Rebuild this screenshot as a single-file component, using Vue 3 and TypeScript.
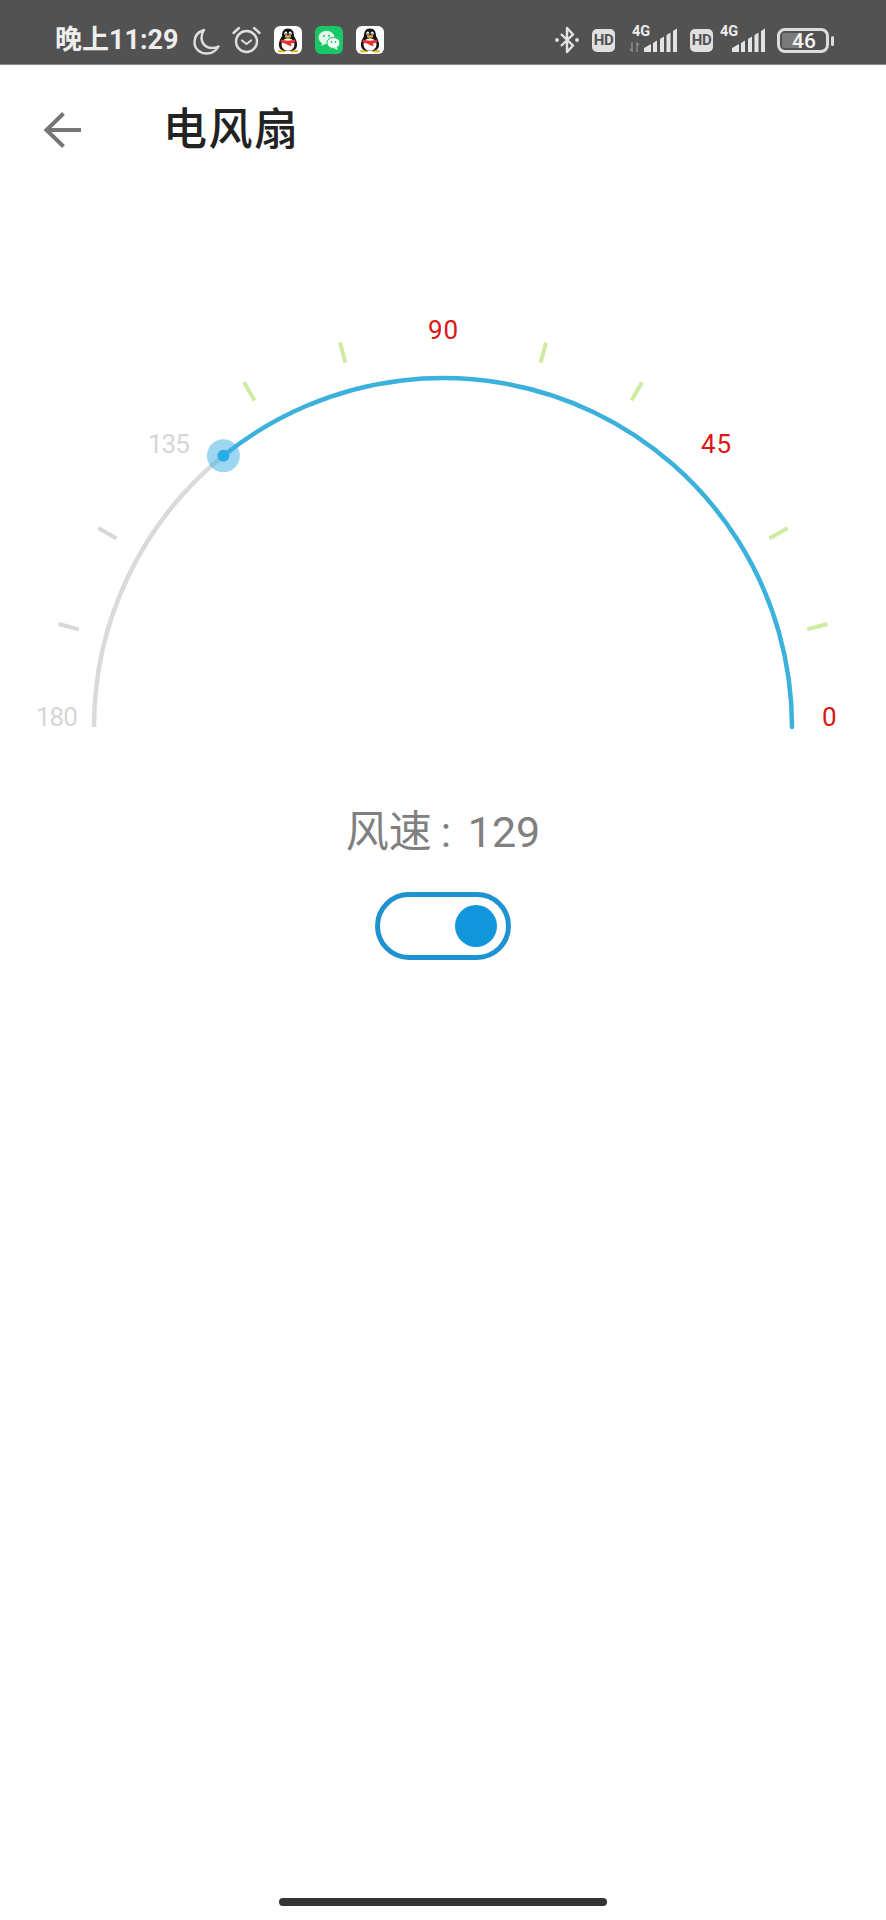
<script setup lang="ts">
const cx = 443
const cy = 427
const r = 349
const value = 129
const rad = (d: number) => (d * Math.PI) / 180
const pt = (d: number, radius: number) => ({
  x: +(cx + radius * Math.cos(rad(d))).toFixed(2),
  y: +(cy - radius * Math.sin(rad(d))).toFixed(2),
})
const thumb = pt(value, r)
const greyArc = `M${cx - r} ${cy} A${r} ${r} 0 0 1 ${thumb.x} ${thumb.y}`
const blueArc = `M${thumb.x} ${thumb.y} A${r} ${r} 0 0 1 ${cx + r} ${cy}`
const ticks = [15, 30, 60, 75, 105, 120, 150, 165].map((d) => ({
  a: pt(d, 377),
  b: pt(d, 398),
  on: d <= value,
}))
const labels = [
  { t: '180', x: 36, y: 426, on: false },
  { t: '135', x: 148, y: 153, on: false },
  { t: '90', x: 428, y: 39, on: true },
  { t: '45', x: 701, y: 153, on: true },
  { t: '0', x: 822, y: 426, on: true },
]
const signalBars = [
  'M0 24 L0 20 L7 16 L7 24 Z',
  'M9 24 L9 15 L13 12.5 L13 24 Z',
  'M16 24 L16 11 L20 8.5 L20 24 Z',
  'M22.5 24 L22.5 7 L26.5 4.5 L26.5 24 Z',
  'M29 24 L29 3 L33 0.5 L33 24 Z',
]
const apps = ['qq', 'wechat', 'qq']
</script>

<template>
  <div class="page">
    <div class="status">
      <div class="status-left">
        <span class="time">晚上11:29</span>
        <svg class="moon" width="27" height="27" viewBox="0 0 27 27">
          <path d="M11 2 C4.500 4 1.500 9 1.500 14 C1.500 21 7 25.500 13.500 25.500 C18.500 25.500 23 23 25.500 18.500 C24 19.500 21.500 20 19 20 C13 20 8.500 15.500 8.500 10 C8.500 7 9.500 4 11 2 Z" fill="none" stroke="#dedede" stroke-width="2.400" stroke-linejoin="round" />
        </svg>
        <svg class="alarm" width="29" height="28" viewBox="0 0 29 28">
          <circle cx="14.500" cy="15.500" r="10.500" fill="none" stroke="#dedede" stroke-width="2.400" />
          <path d="M10 14.500 L14.500 18 L19 14.500" fill="none" stroke="#dedede" stroke-width="2.200" stroke-linecap="round" stroke-linejoin="round" />
          <path d="M1.500 7 L7 2 M22 2 L27.500 7" fill="none" stroke="#dedede" stroke-width="2.400" stroke-linecap="round" />
        </svg>
        <div class="apps">
          <template v-for="(app, i) in apps" :key="i">
            <svg v-if="app === 'qq'" width="28" height="28" viewBox="0 0 28 28">
              <rect width="28" height="28" rx="6" fill="#fff" />
              <ellipse cx="8" cy="25" rx="4" ry="1.500" fill="#e8b93a" />
              <ellipse cx="20" cy="25" rx="4" ry="1.500" fill="#e8b93a" />
              <path d="M14 2.500 C9.500 2.500 8 6 8 10 C6 13 4.500 17 5 20 C5.500 23 8 25 14 25 C20 25 22.500 23 23 20 C23.500 17 22 13 20 10 C20 6 18.500 2.500 14 2.500 Z" fill="#141414" />
              <ellipse cx="14" cy="18.500" rx="6.500" ry="6.300" fill="#fff" />
              <ellipse cx="11.800" cy="7.500" rx="1.500" ry="2" fill="#fff" />
              <ellipse cx="16.200" cy="7.500" rx="1.500" ry="2" fill="#fff" />
              <circle cx="12" cy="8" r=".8" fill="#111" />
              <circle cx="16" cy="8" r=".8" fill="#111" />
              <ellipse cx="14" cy="10.500" rx="3.200" ry="1.300" fill="#efb12e" />
              <path d="M7 13.500 C11 15 17 15 21 13.500 L21.500 16 C20 17 18.500 17.300 17 17.500 L17.500 20.500 L14 19 L11 17.500 C9.500 17.300 8 17 6.500 16 Z" fill="#e5322d" />
            </svg>
            <svg v-else width="28" height="28" viewBox="0 0 28 28">
              <rect width="28" height="28" rx="6" fill="#18c767" />
              <ellipse cx="11.500" cy="11.500" rx="8" ry="6.800" fill="#e4f7ea" />
              <path d="M7 16 L6.500 20 L11 17.500 Z" fill="#e4f7ea" />
              <ellipse cx="18.500" cy="17" rx="6.500" ry="5.500" fill="#f6fdf8" stroke="#18c767" stroke-width="1" />
              <path d="M21.500 21 L23 24 L19 22.300 Z" fill="#f6fdf8" />
              <circle cx="9" cy="10" r="1" fill="#18c767" />
              <circle cx="14" cy="10" r="1" fill="#18c767" />
              <circle cx="16.500" cy="16" r=".9" fill="#18c767" />
              <circle cx="20.500" cy="16" r=".9" fill="#18c767" />
            </svg>
          </template>
        </div>
      </div>
      <div class="status-right">
        <svg class="bt" width="24" height="28" viewBox="0 0 24 28">
          <path d="M6 8 L18 19.500 L12 26 L12 2 L18 8.500 L6 20" fill="none" stroke="#e4e4e4" stroke-width="2.400" stroke-linejoin="round" />
          <circle cx="2" cy="14" r="1.900" fill="#e4e4e4" />
          <circle cx="22" cy="14" r="1.900" fill="#e4e4e4" />
        </svg>
        <span class="hd first">HD</span>
        <div class="net">
          <span class="g4">4G</span>
          <svg class="arrows" width="11" height="10" viewBox="0 0 11 10">
            <path d="M3 0 V9 L1 7 M8 10 V1 L10 3" fill="none" stroke="#8e8e8e" stroke-width="1.400" />
          </svg>
          <svg class="sig" width="33" height="24" viewBox="0 0 33 24">
            <path v-for="(d, i) in signalBars" :key="i" :d="d" fill="#e4e4e4" />
          </svg>
        </div>
        <span class="hd second">HD</span>
        <div class="net net-b">
          <span class="g4">4G</span>
          <svg class="sig" width="33" height="24" viewBox="0 0 33 24">
            <path v-for="(d, i) in signalBars" :key="i" :d="d" fill="#e4e4e4" />
          </svg>
        </div>
        <div class="battery">
          <span class="fill"></span>
          <span class="pct">46</span>
        </div>
        <span class="nub"></span>
      </div>
    </div>

    <header class="bar">
      <svg class="back" width="40" height="38" viewBox="0 0 40 38">
        <path d="M38 19 H4 M20.500 2.500 L3.500 19 L20.500 35.500" fill="none" stroke="#757575" stroke-width="4" />
      </svg>
      <h1 class="title">电风扇</h1>
    </header>

    <main class="main">
      <svg class="gauge" width="886" height="440" viewBox="0 0 886 440">
        <line
          v-for="(k, i) in ticks"
          :key="i"
          :x1="k.a.x"
          :y1="k.a.y"
          :x2="k.b.x"
          :y2="k.b.y"
          :stroke="k.on ? '#cfeb9f' : '#d8d8d8'"
          stroke-width="4"
        />
        <path :d="greyArc" fill="none" stroke="#dadada" stroke-width="4.500" />
        <path :d="blueArc" fill="none" stroke="#3bb1dc" stroke-width="4.500" stroke-linecap="round" />
        <circle :cx="thumb.x" :cy="thumb.y" r="16.500" fill="#3badE3" fill-opacity=".5" />
        <circle :cx="thumb.x" :cy="thumb.y" r="6" fill="#27aee8" />
        <text
          v-for="l in labels"
          :key="l.t"
          :x="l.x"
          :y="l.y"
          class="lab"
          :class="l.on ? 'lab-on' : 'lab-off'"
        >{{ l.t }}</text>
      </svg>
      <div class="speed">风速<span class="colon">:</span> 129</div>
      <div class="toggle"><span class="knob"></span></div>
      <div class="home"></div>
    </main>
  </div>
</template>

<style scoped>
.page {
  width: 886px;
  height: 1920px;
  display: flex;
  flex-direction: column;
  background: #fff;
  font-family: Roboto, "Noto Sans CJK SC", sans-serif;
  overflow: hidden;
}
.status {
  height: 65px;
  background: #525252;
  display: flex;
  justify-content: space-between;
  align-items: flex-start;
  box-sizing: border-box;
  border-bottom: 1px solid #8a8a8a;
  padding: 26px 52px 0 55px;
  color: #eee;
}
.status-left,
.status-right {
  display: flex;
  align-items: flex-start;
}
.time {
  font-size: 27px;
  line-height: 29px;
  font-weight: 700;
  white-space: nowrap;
  width: 138px;
}
.moon {
  margin-top: 2px;
}
.alarm {
  margin-left: 12px;
}
.apps {
  display: flex;
  gap: 13px;
  margin-left: 13px;
}
.bt {
  margin-right: 13px;
}
.hd {
  width: 23px;
  height: 23px;
  margin-top: 3px;
  border-radius: 5px;
  background: #e0e0e0;
  color: #525252;
  font-size: 15px;
  line-height: 23px;
  font-weight: 700;
  text-align: center;
  letter-spacing: -0.3px;
}
.net {
  position: relative;
  width: 48px;
  height: 26px;
  margin-left: 14px;
  display: flex;
  align-items: flex-end;
  justify-content: flex-end;
}
.net-b {
  width: 44px;
  margin-left: 8px;
}
.g4 {
  position: absolute;
  left: 3px;
  top: 0;
  font-size: 14.500px;
  line-height: 11px;
  font-weight: 700;
  color: #eee;
}
.net-b .g4 {
  left: -1px;
}
.arrows {
  position: absolute;
  left: 0;
  bottom: 0;
}
.second {
  margin-left: 13px;
}
.battery {
  position: relative;
  width: 52px;
  height: 25px;
  margin-left: 12px;
  margin-top: 2px;
  box-sizing: border-box;
  border: 3px solid #dcdcdc;
  border-radius: 8px;
  display: flex;
  align-items: center;
  justify-content: center;
}
.fill {
  position: absolute;
  left: 2px;
  top: 2px;
  bottom: 2px;
  width: 19px;
  background: #7b7b7b;
  border-radius: 2px;
}
.pct {
  position: relative;
  left: 1px;
  font-size: 21px;
  line-height: 20px;
  font-weight: 500;
  color: #f4f4f4;
}
.nub {
  width: 3px;
  height: 10px;
  margin: 10px 0 0 2px;
  background: #dcdcdc;
  border-radius: 1.500px;
}
.bar {
  height: 130px;
  display: flex;
  align-items: center;
  padding-left: 43px;
  box-sizing: border-box;
}
.back {
  flex: none;
}
.title {
  margin: 0 0 0 80px;
  font-size: 44px;
  line-height: 48px;
  font-weight: 500;
  letter-spacing: 1.5px;
  color: #222;
}
.main {
  flex: 1;
  display: flex;
  flex-direction: column;
  align-items: center;
  padding-top: 105px;
}
.gauge {
  display: block;
  flex: none;
}
.lab {
  font-family: Roboto, sans-serif;
  font-size: 26px;
}
.lab-on {
  fill: #dd1515;
  letter-spacing: 1px;
}
.lab-off {
  fill: #d6d6d6;
  letter-spacing: -1px;
}
.speed {
  margin-top: 64px;
  font-size: 43px;
  line-height: 56px;
  color: #808080;
  white-space: nowrap;
}
.colon {
  margin: 0 6px 0 9px;
}
.toggle {
  width: 136px;
  height: 68px;
  margin-top: 32px;
  box-sizing: border-box;
  border: 5px solid #1f93d0;
  border-radius: 34px;
  display: flex;
  align-items: center;
  justify-content: flex-end;
  padding-right: 9px;
}
.knob {
  width: 42px;
  height: 42px;
  border-radius: 50%;
  background: #1296db;
}
.home {
  width: 328px;
  height: 8px;
  margin-top: auto;
  margin-bottom: 14px;
  border-radius: 4px;
  background: #333;
}
</style>
